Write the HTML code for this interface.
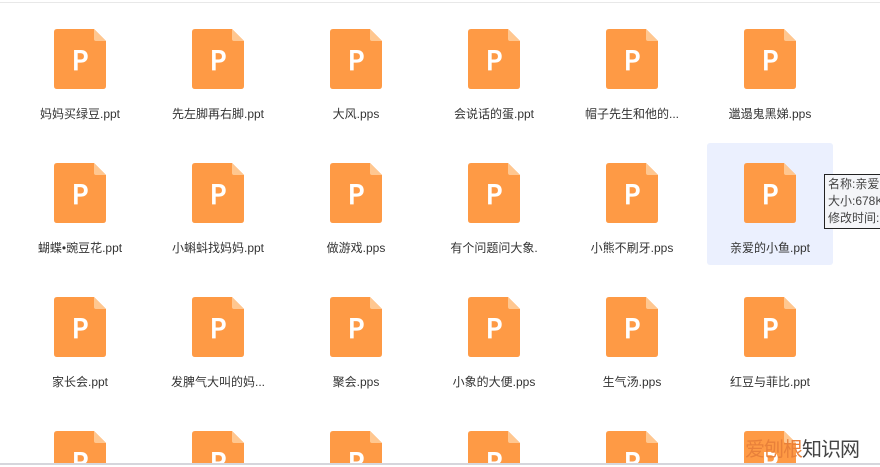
<!DOCTYPE html>
<html><head><meta charset="utf-8"><style>
html,body{margin:0;padding:0;overflow:hidden;width:880px;height:467px}
#w{width:880px;height:467px;overflow:hidden;background:#fff;position:relative;font-family:"Liberation Sans","Noto Sans CJK SC",sans-serif}
.top{position:absolute;left:0;top:2px;width:880px;height:1px;background:#e8e8e8}
.bot{position:absolute;left:0;top:463px;width:880px;height:2px;background:#fff;border-top:2px solid #d6d6dc}
.it{position:absolute;width:126px;height:122px;border-radius:3px}
.ic{position:absolute;left:37px;top:20px;width:52px;height:60px}
.lb{position:absolute;left:0;top:96px;width:126px;text-align:center;font-size:12px;color:#333;white-space:nowrap}
.sel{background:#ebf0fe}
.bi{position:absolute;top:431px;width:52px;height:32px;overflow:hidden}
.bi svg{width:52px;height:60px;display:block}
.tip{position:absolute;left:824px;top:174px;width:56px;height:55px;border:1px solid #222;border-right:none;background:#f4f5f8;font-size:12px;line-height:17px;color:#444;padding:1px 0 0 3px;box-sizing:border-box;white-space:nowrap;overflow:hidden}
.wm{position:absolute;left:745px;top:438px;font-size:20px;line-height:24px;color:#444;letter-spacing:-1px;z-index:3}
.wm span{color:#e8803a}
</style></head><body><div id="w">
<div class="top"></div>
<svg width="0" height="0" style="position:absolute"><defs><symbol id="p" viewBox="0 0 52 60"><path d="M3 0H40L52 12V57Q52 60 49 60H3Q0 60 0 57V3Q0 0 3 0Z" fill="#fe9a45"/><path d="M40 0L52 12H42Q40 12 40 10Z" fill="#ffc790"/><text x="26" y="41" text-anchor="middle" font-family="DejaVu Sans" font-size="27" fill="#fff" stroke="#fff" stroke-width="0.9">P</text></symbol></defs></svg>
<div id="g"></div>
<script>
var n=[["妈妈买绿豆.ppt","先左脚再右脚.ppt","大风.pps","会说话的蛋.ppt","帽子先生和他的...","邋遢鬼黑娣.pps"],["蝴蝶•豌豆花.ppt","小蝌蚪找妈妈.ppt","做游戏.pps","有个问题问大象.","小熊不刷牙.pps","亲爱的小鱼.ppt"],["家长会.ppt","发脾气大叫的妈...","聚会.pps","小象的大便.pps","生气汤.pps","红豆与菲比.ppt"]];
var h="";
for(var r=0;r<4;r++)for(var c=0;c<6;c++){
if(r<3)h+='<div class="it'+(r==1&&c==5?' sel':'')+'" style="left:'+(17+138*c)+'px;top:'+(9+134*r)+'px"><svg class="ic"><use href="#p"/></svg><div class="lb">'+n[r][c]+'</div></div>';
else h+='<div class="bi" style="left:'+(54+138*c)+'px"><svg><use href="#p"/></svg></div>';}
document.getElementById("g").innerHTML=h;
</script>
<div class="tip">名称:亲爱<br>大小:678K<br>修改时间:</div>
<div class="bot"></div>
<div class="wm"><span>爱刨根</span>知识网</div>
</div></body></html>
